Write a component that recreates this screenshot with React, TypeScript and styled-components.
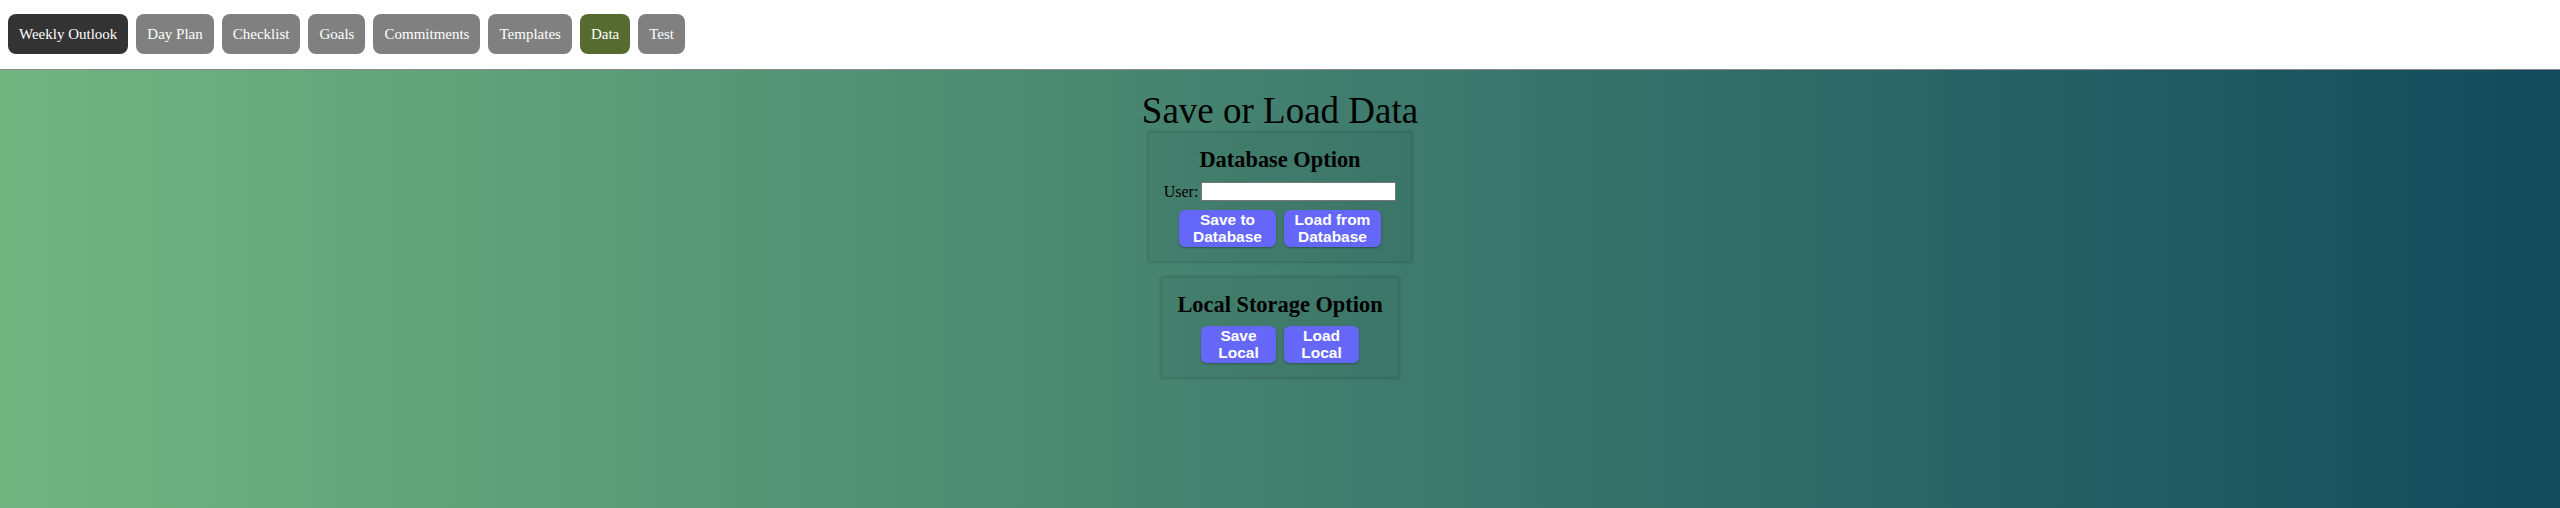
import React from "react";
import styled, { createGlobalStyle } from "styled-components";

const GlobalStyle = createGlobalStyle`
  html, body {
    margin: 0;
    padding: 0;
    font-family: "Liberation Serif", "Times New Roman", serif;
    background: #fff;
  }
`;

const Header = styled.nav`
  display: flex;
  align-items: center;
  gap: 8px;
  padding: 14px 8px 15px;
  background: #fff;
  border-bottom: 1px solid #8a8a8a;
  box-shadow: 0 1px 2px rgba(0, 0, 0, 0.15);
`;

const NavButton = styled.button<{ $tone: "active" | "current" | "idle" }>`
  height: 40px;
  padding: 0 11px;
  border: none;
  border-radius: 8px;
  font-family: "Liberation Serif", "Times New Roman", serif;
  font-size: 15px;
  color: #fff;
  cursor: pointer;
  background: ${({ $tone }) =>
    $tone === "active" ? "#333333" : $tone === "current" ? "#556b2f" : "#808080"};
`;

const Main = styled.main`
  display: flex;
  flex-direction: column;
  align-items: center;
  min-height: calc(100vh - 70px);
  background: linear-gradient(to right, #72b581, #134a5c);
`;

const Title = styled.h1`
  margin: 20px 0 0;
  font-size: 37px;
  line-height: 42px;
  font-weight: normal;
  color: #000;
`;

const CardStack = styled.div`
  display: flex;
  flex-direction: column;
  align-items: center;
  gap: 15px;
`;

const Card = styled.section`
  display: flex;
  flex-direction: column;
  align-items: center;
  padding: 14px 15px 14px;
  border: 1px solid rgba(0, 0, 0, 0.07);
  background: rgba(0, 0, 0, 0.035);
  box-shadow: 0 0 3px rgba(0, 0, 0, 0.25);
`;

const CardTitle = styled.h3`
  margin: 0 0 8px;
  font-size: 22.4px;
  line-height: 26px;
  font-weight: bold;
  color: #000;
`;

const FieldRow = styled.label`
  display: flex;
  align-items: center;
  gap: 3px;
  height: 21px;
  margin-bottom: 8px;
  font-size: 16px;
  color: #000;
`;

const TextInput = styled.input`
  box-sizing: border-box;
  width: 195px;
  height: 19px;
  border: 1px solid #767676;
  background: #fff;
  padding: 1px 2px;
`;

const ButtonRow = styled.div`
  display: flex;
  gap: 8px;
`;

const ActionButton = styled.button<{ $width: number }>`
  width: ${({ $width }) => $width}px;
  padding: 1px 0 2px;
  border: none;
  border-radius: 6px;
  background: #6567f8;
  color: #fff;
  font-family: "Liberation Sans", Arial, sans-serif;
  font-size: 15.5px;
  font-weight: bold;
  line-height: 17px;
  text-align: center;
  box-shadow: 0 1px 2px rgba(0, 0, 0, 0.3);
  cursor: pointer;
`;

const tabs = [
  { label: "Weekly Outlook", tone: "active" as const },
  { label: "Day Plan", tone: "idle" as const },
  { label: "Checklist", tone: "idle" as const },
  { label: "Goals", tone: "idle" as const },
  { label: "Commitments", tone: "idle" as const },
  { label: "Templates", tone: "idle" as const },
  { label: "Data", tone: "current" as const },
  { label: "Test", tone: "idle" as const },
];

const App: React.FunctionComponent = () => {
  return (
    <>
      <GlobalStyle />
      <Header>
        {tabs.map((t) => (
          <NavButton key={t.label} $tone={t.tone}>
            {t.label}
          </NavButton>
        ))}
      </Header>
      <Main>
        <Title>Save or Load Data</Title>
        <CardStack>
          <Card>
            <CardTitle>Database Option</CardTitle>
            <FieldRow>
              User: <TextInput type="text" />
            </FieldRow>
            <ButtonRow>
              <ActionButton $width={97}>Save to Database</ActionButton>
              <ActionButton $width={97}>Load from Database</ActionButton>
            </ButtonRow>
          </Card>
          <Card>
            <CardTitle>Local Storage Option</CardTitle>
            <ButtonRow>
              <ActionButton $width={75}>Save Local</ActionButton>
              <ActionButton $width={75}>Load Local</ActionButton>
            </ButtonRow>
          </Card>
        </CardStack>
      </Main>
    </>
  );
};

export default App;
